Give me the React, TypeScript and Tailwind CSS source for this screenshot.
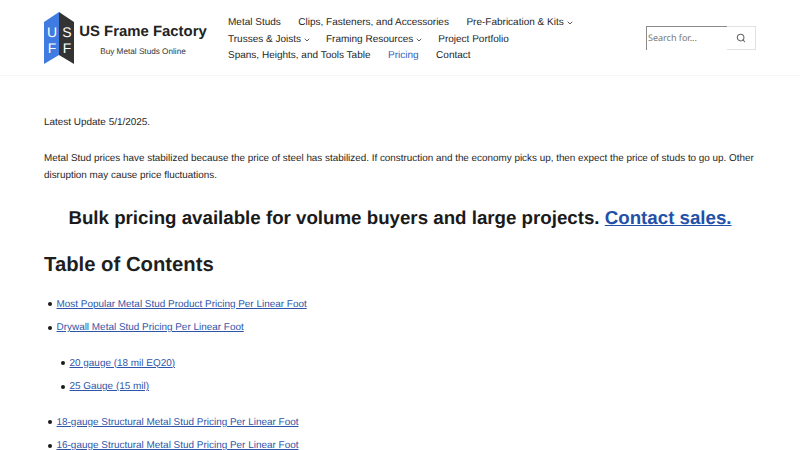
import { ChevronDown, Search } from "lucide-react";

function Logo() {
  return (
    <svg width="30" height="52" viewBox="0 0 30 52" className="shrink-0">
      <polygon points="0,10 15,0 15,43 0,52" fill="#3f7be0" />
      <polygon points="15,0 30,10 30,52 15,43" fill="#333333" />
      <g fontFamily="'Liberation Sans',sans-serif" fontSize="14" fill="#fff" textAnchor="middle">
        <text x="8" y="25">U</text>
        <text x="23" y="25">S</text>
        <text x="8" y="41">F</text>
        <text x="23" y="41">F</text>
      </g>
    </svg>
  );
}

function Nav({ label, caret, active }: { label: string; caret?: boolean; active?: boolean }) {
  return (
    <a className={`flex items-center whitespace-nowrap ${active ? "text-[#2f5fbd]" : "text-[#262626]"}`}>
      {label}
      {caret && <ChevronDown size={8} strokeWidth={2.25} className="ml-[2px] -mr-[2.5px] mt-[1px]" />}
    </a>
  );
}

function Item({ children }: { children: string }) {
  return (
    <li className="flex h-[23.5px] items-center gap-[5px] leading-[23.5px]">
      <span className="h-[4px] w-[4px] shrink-0 rounded-full bg-[#1a1a1a]" />
      <a className="underline underline-offset-1 decoration-1 text-[#2f55a8]">{children}</a>
    </li>
  );
}

export default function App() {
  return (
    <div className="h-[450px] w-[800px] overflow-hidden bg-white font-['Liberation_Sans',sans-serif] text-[#1a1a1a] [text-rendering:geometricPrecision]">
      <header className="flex h-[76px] items-start border-b border-[#f6f6f6] pl-[44px] pr-[44px]">
        <div className="mt-[12px] flex w-[184px] items-start">
          <Logo />
          <div className="ml-[5px] w-[128px] text-center">
            <div className="mt-[9px] text-[14.9px] leading-[22px] font-bold whitespace-nowrap text-[#222]">US Frame Factory</div>
            <div className="mt-[2.5px] text-[8.2px] leading-[12px] whitespace-nowrap text-[#333]">Buy Metal Studs Online</div>
          </div>
        </div>
        <nav className="mt-[14px] flex w-[400px] flex-col text-[10px]">
          <div className="flex h-[17px] items-center gap-[17.5px]">
            <Nav label="Metal Studs" />
            <Nav label="Clips, Fasteners, and Accessories" />
            <Nav label="Pre-Fabrication & Kits" caret />
          </div>
          <div className="flex h-[17px] items-center gap-[17.5px]">
            <Nav label="Trusses & Joists" caret />
            <Nav label="Framing Resources" caret />
            <Nav label="Project Portfolio" />
          </div>
          <div className="flex h-[15px] items-center gap-[17.5px]">
            <Nav label="Spans, Heights, and Tools Table" />
            <Nav label="Pricing" active />
            <Nav label="Contact" />
          </div>
        </nav>
        <div className="mt-[26px] ml-[18px] flex h-[24px] w-[110px]">
          <div className="flex w-[81px] items-center border-t border-l border-[#8a8a8a] pb-[2px] pl-[1px] font-['Noto_Sans',sans-serif] text-[9px] text-[#777]">
            Search for...
          </div>
          <div className="flex flex-1 items-center justify-center border-t border-r border-b border-[#e2e2e2] text-[#666]">
            <Search size={10} strokeWidth={2.5} />
          </div>
        </div>
      </header>
      <main className="px-[44px] text-[9.95px] text-[#262626]">
        <p className="mt-[39px] leading-[16.5px]">Latest Update 5/1/2025.</p>
        <p className="mt-[18px] text-[9.88px] leading-[17px]">
          Metal Stud prices have stabilized because the price of steel has stabilized. If construction and the economy picks up, then expect the price of studs to go up. Other disruption may cause price fluctuations.
        </p>
        <h3 className="mt-[20px] text-center text-[18.72px] leading-[28px] font-bold text-[#1a1a1a]">
          Bulk pricing available for volume buyers and large projects.{" "}
          <a className="underline text-[#2350a8]">Contact sales.</a>
        </h3>
        <h2 className="mt-[18px] text-[20.3px] leading-[30px] font-bold text-[#1f1f1f]">Table of Contents</h2>
        <ul className="mt-[13px] pl-[3.5px]">
          <Item>Most Popular Metal Stud Product Pricing Per Linear Foot</Item>
          <Item>Drywall Metal Stud Pricing Per Linear Foot</Item>
          <ul className="mt-[12px] mb-[12px] pl-[13px]">
            <Item>20 gauge (18 mil EQ20)</Item>
            <Item>25 Gauge (15 mil)</Item>
          </ul>
          <Item>18-gauge Structural Metal Stud Pricing Per Linear Foot</Item>
          <Item>16-gauge Structural Metal Stud Pricing Per Linear Foot</Item>
        </ul>
      </main>
    </div>
  );
}
